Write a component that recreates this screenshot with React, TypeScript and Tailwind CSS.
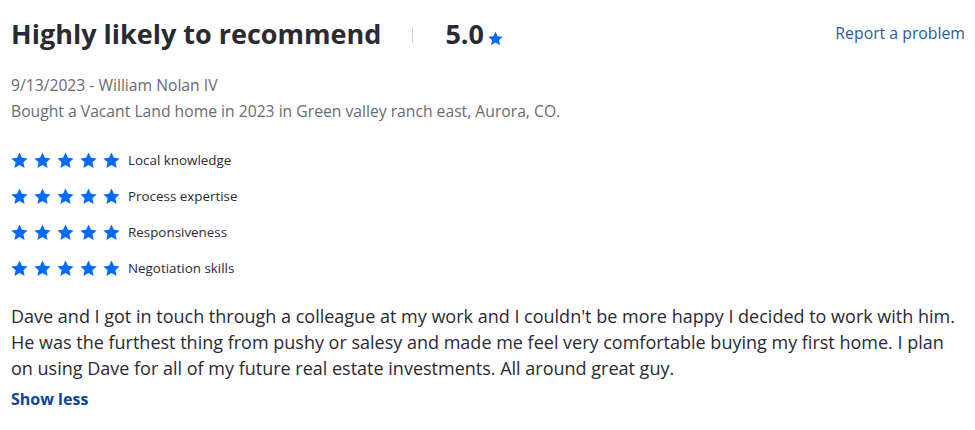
import React from "react";

const Star = ({ size = 16 }: { size?: number }) => (
  <svg width={size} height={size} viewBox="0 0 24 24" fill="#006aff">
    <path d="M12 0.8l3.4 7.4 8.1.9-6 5.5 1.7 8L12 18.5l-7.2 4.1 1.7-8-6-5.5 8.1-.9z" />
  </svg>
);

const ratings = ["Local knowledge", "Process expertise", "Responsiveness", "Negotiation skills"];

export default function App() {
  return (
    <div className="w-[975px] h-[430px] bg-white px-[11px] pt-[16px]" style={{ fontFamily: '"Open Sans", sans-serif' }}>
      <div className="flex items-start justify-between">
        <div className="flex items-center">
          <h2 className="text-[27px] leading-[36px] font-bold text-[#2a2a33]">Highly likely to recommend</h2>
          <div className="w-px h-[16px] bg-[#d1d1d5] ml-[31px] mr-[32px] mt-[2px]" />
          <span className="text-[27px] leading-[36px] font-bold text-[#2a2a33]">5.0</span>
          <span className="ml-[4px] mt-[8px]"><Star size={15} /></span>
        </div>
        <a className="text-[15.8px] leading-[24px] text-[#2a5aa6] mt-[5px] mr-[-1px]">Report a problem</a>
      </div>
      <div className="mt-[20px] text-[15.7px] leading-[26px] text-[#696b73]">
        <div>9/13/2023 - William Nolan IV</div>
        <div>Bought a Vacant Land home in 2023 in Green valley ranch east, Aurora, CO.</div>
      </div>
      <div className="mt-[26px] flex flex-col gap-[16px]">
        {ratings.map((r) => (
          <div key={r} className="flex items-center h-[20px]">
            <div className="flex gap-[6px]">
              {[0, 1, 2, 3, 4].map((i) => (
                <Star key={i} size={17} />
              ))}
            </div>
            <span className="ml-[8px] text-[13.4px] text-[#2a2a33]">{r}</span>
          </div>
        ))}
      </div>
      <p className="mt-[25px] text-[18px] leading-[26px] text-[#2a2a33]">
        Dave and I got in touch through a colleague at my work and I couldn't be more happy I decided to work with him. He was the furthest thing from pushy or salesy and made me feel very comfortable buying my first home. I plan on using Dave for all of my future real estate investments. All around great guy.
      </p>
      <button className="mt-[6px] text-[16px] leading-[24px] font-bold text-[#0d4599]">Show less</button>
    </div>
  );
}
